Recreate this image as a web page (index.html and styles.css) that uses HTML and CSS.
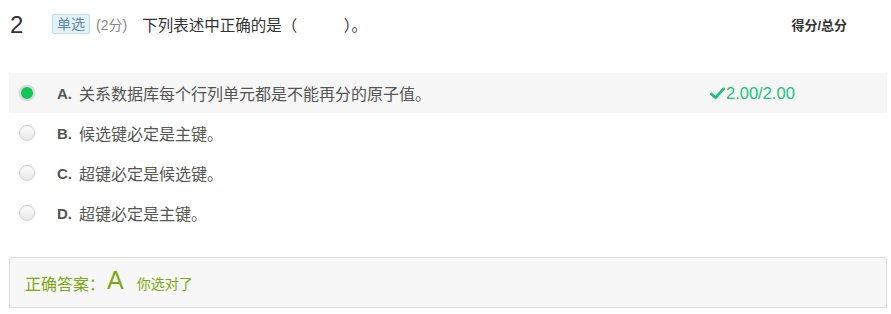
FILE: index.html
```html
<!DOCTYPE html>
<html lang="zh">
<head>
<meta charset="utf-8">
<link rel="stylesheet" href="styles.css">
</head>
<body>
<div class="question">
  <div class="head">
    <span class="num">2</span>
    <span class="tag">单选</span>
    <span class="pts">(2分)</span>
    <span class="title">下列表述中正确的是（　　　）。</span>
    <span class="scorehead">得分/总分</span>
  </div>
  <ul class="options">
    <li class="opt selected">
      <span class="radio on"></span>
      <span class="letter">A.</span>
      <span class="text">关系数据库每个行列单元都是不能再分的原子值。</span>
      <span class="score"><svg class="check" viewBox="0 0 16 14" width="15" height="13"><path d="M1.5 7.5 L6 11.5 L14.5 2" fill="none" stroke="#19c27a" stroke-width="3" stroke-linecap="round" stroke-linejoin="round"/></svg>2.00/2.00</span>
    </li>
    <li class="opt">
      <span class="radio"></span>
      <span class="letter">B.</span>
      <span class="text">候选键必定是主键。</span>
    </li>
    <li class="opt">
      <span class="radio"></span>
      <span class="letter">C.</span>
      <span class="text">超键必定是候选键。</span>
    </li>
    <li class="opt">
      <span class="radio"></span>
      <span class="letter">D.</span>
      <span class="text">超键必定是主键。</span>
    </li>
  </ul>
  <div class="answer">
    <span class="ans-label">正确答案：</span>
    <span class="ans-key">A</span>
    <span class="ans-note">你选对了</span>
  </div>
</div>
</body>
</html>
```
FILE: styles.css
```css
* { box-sizing: border-box; }
body {
  margin: 0;
  background: #fff;
  font-family: "Liberation Sans", Arial, "Noto Sans CJK SC", sans-serif;
  color: #333;
}
.question {
  width: 891px;
  padding: 0 4px 0 9px;
}
.head {
  display: flex;
  align-items: center;
  height: 46px;
  padding-top: 4px;
}
.num {
  font-size: 24px;
  color: #333;
  width: 43px;
  padding-left: 1px;
}
.tag {
  font-size: 14px;
  color: #5f86a6;
  background: #e3f3fd;
  border: 1px solid #b6dbf3;
  border-radius: 2px;
  padding: 0 4px;
  line-height: 18px;
  margin-top: -3px;
}
.pts {
  font-size: 14px;
  color: #888;
  margin-left: 6px;
  margin-top: -2px;
}
.title {
  font-size: 15.5px;
  color: #333;
  margin-left: 15px;
  margin-top: -2px;
  flex: 1;
}
.scorehead {
  font-size: 13px;
  font-weight: bold;
  color: #333;
  margin-right: 40px;
  margin-top: -2px;
}
.options {
  list-style: none;
  margin: 27px 0 0 0;
  padding: 0;
}
.opt {
  display: flex;
  align-items: center;
  height: 40px;
  font-size: 16px;
  color: #555;
}
.opt.selected { background: #f6f6f6; }
.radio {
  width: 16px;
  height: 16px;
  border-radius: 50%;
  border: 1px solid #cfcfcf;
  background: linear-gradient(#fdfdfd, #e9e9e9);
  margin-left: 10px;
  flex: none;
}
.radio.on {
  background: #0fc656;
  border: 2px solid #d9d9d9;
  box-shadow: 0 0 0 1px #ececec;
}
.letter {
  font-size: 15px;
  font-weight: bold;
  color: #555;
  margin-left: 22px;
  width: 22px;
}
.text {
  flex: 1;
  color: #555;
}
.score {
  display: flex;
  align-items: center;
  font-size: 16.5px;
  color: #19c27a;
  width: 177px;
}
.check { margin-right: 1px; }
.answer {
  margin-top: 24px;
  height: 51px;
  border: 1px solid #dcdcdc;
  background: #f7f7f7;
  display: flex;
  align-items: center;
  padding-left: 15px;
  color: #7aaa10;
}
.ans-label { font-size: 16px; }
.ans-key {
  font-size: 25px;
  margin-left: 2px;
  margin-top: -4px;
}
.ans-note {
  font-size: 14px;
  margin-left: 13px;
}
```
